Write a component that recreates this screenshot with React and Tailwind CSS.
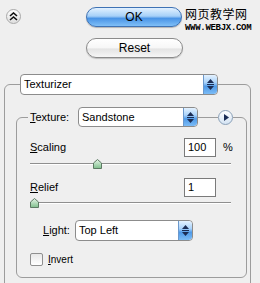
import React from 'react'

const ArrowsIcon = () => (
  <svg width="7" height="11" viewBox="0 0 7 11">
    <polygon points="3.5,0 7,4 0,4" fill="#1b2d55" />
    <rect x="0" y="5" width="7" height="1" fill="#1b2d55" />
    <polygon points="0,7 7,7 3.5,11" fill="#1b2d55" />
  </svg>
)

const Select = ({ text, className }) => (
  <div className={`flex overflow-hidden rounded-[4px] border border-[#8c8c8c] bg-white ${className}`}>
    <span className="flex-1 pl-[3px] text-[11px] leading-[19px] text-black">{text}</span>
    <span className="flex w-[14px] items-center justify-center rounded-r-[3px] border-l border-[#6b98cc] bg-[linear-gradient(to_bottom,#e4f2ff_0%,#a9d2fa_40%,#4f9ae8_60%,#7cbcf6_100%)]">
      <ArrowsIcon />
    </span>
  </div>
)

const Thumb = () => (
  <svg width="9" height="10" viewBox="0 0 9 10">
    <defs>
      <linearGradient id="tg" x1="0" y1="0" x2="0" y2="1">
        <stop offset="0" stopColor="#e6f5e8" />
        <stop offset="1" stopColor="#7fbf8c" />
      </linearGradient>
    </defs>
    <polygon points="4.5,0.5 8.5,4 8.5,9.5 0.5,9.5 0.5,4" fill="url(#tg)" stroke="#5d7a63" strokeWidth="1" />
  </svg>
)

const Slider = ({ pos }) => (
  <div className="relative h-[10px] w-[201px]">
    <div className="absolute left-0 right-0 top-[4px] h-px bg-[#8f8f8f]" />
    <div className="absolute left-0 right-0 top-[5px] h-px bg-white" />
    <div className="absolute top-0" style={{ left: pos }}>
      <Thumb />
    </div>
  </div>
)

const NumBox = ({ value }) => (
  <div className="h-[19px] w-[32px] border border-[#7a7a7a] bg-white pl-[3px] text-[11px] leading-[17px] text-black">
    {value}
  </div>
)

export default function App() {
  return (
    <div className="h-[283px] w-[260px] overflow-hidden bg-[#efefef] font-['Liberation_Sans',Arial,sans-serif] text-[11px] text-black">
      {/* top buttons */}
      <div className="flex items-start pt-[7px]">
        <div className="ml-[6px] mt-[2px] flex h-[15px] w-[15px] items-center justify-center rounded-full border border-[#a9a9a9] bg-[linear-gradient(to_bottom,#ffffff,#dedede)]">
          <svg width="9" height="9" viewBox="0 0 9 9">
            <polyline points="1,4 4.5,1 8,4" fill="none" stroke="#111" strokeWidth="1.6" />
            <polyline points="1,8 4.5,5 8,8" fill="none" stroke="#111" strokeWidth="1.6" />
          </svg>
        </div>
        <div className="ml-[65px] flex flex-col gap-[11px]">
          <button className="h-[20px] w-[96px] rounded-full border border-[#3e72b4] bg-[linear-gradient(to_bottom,#e2f1ff_0%,#a6d0f8_45%,#4a94e6_58%,#7fbff7_100%)] text-[12px] leading-[18px] text-black shadow-[0_1px_1px_rgba(0,0,0,0.25)]">
            OK
          </button>
          <button className="h-[20px] w-[97px] rounded-full border border-[#8b8b8b] bg-[linear-gradient(to_bottom,#ffffff_0%,#f7f7f7_48%,#e4e4e4_56%,#f6f6f6_100%)] text-[12px] leading-[18px] text-black shadow-[0_1px_1px_rgba(0,0,0,0.2)]">
            Reset
          </button>
        </div>
        <div className="ml-[2px] flex flex-col">
          <span className="font-['Noto_Sans_CJK_SC',sans-serif] text-[12px] leading-[14px] tracking-[0.5px] text-black">
            网页教学网
          </span>
          <span className="mt-[3px] font-['Liberation_Mono',monospace] text-[9px] font-bold leading-[9px] tracking-[-0.3px] text-black">
            WWW.WEBJX.COM
          </span>
        </div>
      </div>

      {/* outer group */}
      <fieldset className="ml-[4px] mt-[16px] w-[245px] rounded-[6px] border border-[#9c9c9c] pb-[12px] pl-[11px] pr-[3px]">
        <legend className="ml-[4px]">
          <Select text="Texturizer" className="h-[21px] w-[198px]" />
        </legend>

        {/* inner group */}
        <fieldset className="mt-[12px] w-[229px] rounded-[6px] border border-[#9c9c9c] pb-[10px] pl-[13px] pr-[13px]">
          <legend className="-ml-[2px] flex items-center pl-[2px]">
            <span className="w-[48px] text-[11px]">
              <u>T</u>exture:
            </span>
            <Select text="Sandstone" className="h-[20px] w-[120px]" />
            <div className="h-px w-[20px] bg-[#9c9c9c]" />
            <div className="flex h-[15px] w-[15px] items-center justify-center rounded-full border border-[#8aa0b8] bg-[linear-gradient(to_bottom,#ffffff,#d3e3f3)]">
              <svg width="6" height="7" viewBox="0 0 6 7">
                <polygon points="1,0 6,3.5 1,7" fill="#1b2d55" />
              </svg>
            </div>
          </legend>

          <div className="mt-[11px] flex items-center">
            <span className="flex-1">
              <u>S</u>caling
            </span>
            <NumBox value="100" />
            <span className="ml-[7px] w-[10px]">%</span>
          </div>
          <div className="mt-[2px]">
            <Slider pos={63} />
          </div>

          <div className="mt-[9px] flex items-center">
            <span className="flex-1">
              <u>R</u>elief
            </span>
            <NumBox value="1" />
            <span className="ml-[7px] w-[10px]" />
          </div>
          <div className="mt-[1px]">
            <Slider pos={0} />
          </div>

          <div className="mt-[12px] flex items-center pl-[13px]">
            <span className="w-[32px]">
              <u>L</u>ight:
            </span>
            <Select text="Top Left" className="h-[21px] w-[118px]" />
          </div>

          <div className="mt-[11px] flex items-center">
            <div className="h-[13px] w-[13px] rounded-[2px] border border-[#8f8f8f] bg-[linear-gradient(to_bottom,#e8e8e8,#ffffff)]" />
            <span className="ml-[5px] text-[10px]">
              <u>I</u>nvert
            </span>
          </div>
        </fieldset>
      </fieldset>
    </div>
  )
}
